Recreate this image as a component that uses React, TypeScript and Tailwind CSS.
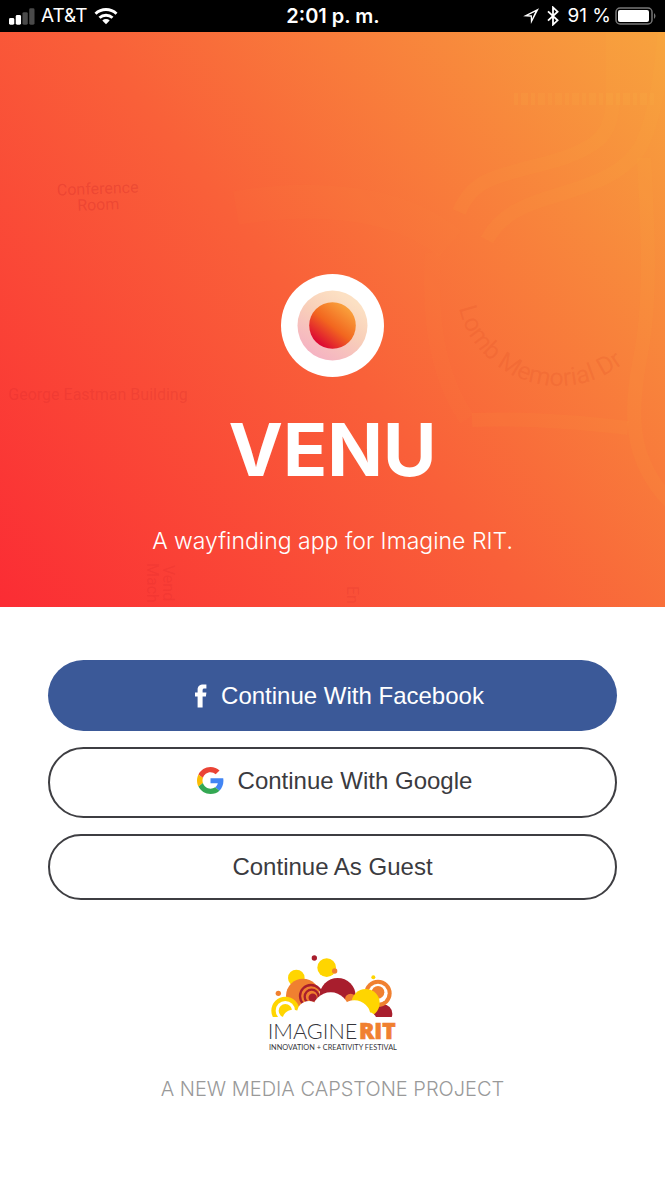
function StatusBar() {
  return (
    <header className="grid h-8 grid-cols-[1fr_auto_1fr] items-center bg-black pr-2 pl-[9px] font-['Inter',sans-serif] text-[19px] leading-6 text-white">
      <div className="flex items-center gap-[6px]">
        <svg viewBox="0 0 27 17" className="h-[17px] w-[26px]" aria-label="Signal strength">
          <rect x="0" y="10" width="5.5" height="7" rx="1.5" fill="#fff" />
          <rect x="7" y="7" width="5.5" height="10" rx="1.5" fill="#fff" />
          <rect x="14" y="4" width="5.5" height="13" rx="1.5" fill="#4a4a4a" />
          <rect x="21" y="0" width="5.5" height="17" rx="1.5" fill="#4a4a4a" />
        </svg>
        <span>AT&amp;T</span>
        <svg viewBox="0 0 24 18" className="h-[18px] w-6" fill="none" stroke="#fff" strokeWidth="2.9" aria-label="Wi-Fi">
          <path d="M1.5 6.7a15.3 15.3 0 0 1 21 0" />
          <path d="M5.5 10.8a9.4 9.4 0 0 1 13 0" />
          <path d="M12 17.2 8.3 13.5a5.4 5.4 0 0 1 7.4 0z" fill="#fff" stroke="none" />
        </svg>
      </div>
      <span className="text-[20px] font-semibold">2:01 p. m.</span>
      <div className="flex items-center justify-end gap-2">
        <svg viewBox="0 0 17 17" className="h-4 w-4" aria-label="Location">
          <path d="M17 .2.2 8.8l8 .4.2 7.8zM13 3.9 9.6 11.5l-.1-3.7-4-.2z" fill="#fff" fillRule="evenodd" />
        </svg>
        <svg viewBox="0 0 12 20" className="h-5 w-3" fill="none" stroke="#fff" strokeWidth="1.8" aria-label="Bluetooth">
          <path d="M1 5.4 10.6 14.3 6 18.6V1.4l4.6 4.3L1 14.6" />
        </svg>
        <span>91 %</span>
        <svg viewBox="0 0 42 18" className="-ml-1 h-[18px] w-[42px]" aria-label="Battery">
          <rect x="1" y="1" width="36" height="16" rx="4" fill="none" stroke="#777" strokeWidth="1.5" />
          <rect x="3" y="3" width="31" height="12" rx="2" fill="#fff" />
          <path d="M39 6q3 3 0 6z" fill="#777" />
        </svg>
      </div>
    </header>
  );
}

function CampusMap() {
  return (
    <svg viewBox="0 0 665 575" preserveAspectRatio="xMidYMid slice" className="absolute inset-0 h-full w-full" aria-hidden="true">
      <g fill="none" stroke="#ffc94f" strokeWidth="14" strokeOpacity=".055">
        <path d="M613 -8v70c0 30-8 42-20 50-30 20-72 22-104 36-16 7-24 18-30 32" />
        <path d="M665 -8c-3 50-10 90-22 118-14 30-50 42-82 52-36 10-60 20-74 46" />
        <path d="M644 126c3 60 8 130-2 190-12 60-16 110 30 156" />
        <path d="M472 388c50-2 106 2 156 8" />
      </g>
      <g fill="none" stroke="#ffab4a" strokeOpacity=".035">
        <path d="M236 176c70-12 160-10 214 36" strokeWidth="34" />
        <path d="M433 221c-4 60 2 120 34 166" strokeWidth="16" />
      </g>
      <path d="M514 67h142" stroke="#ffd35c" strokeOpacity=".07" strokeWidth="12" strokeDasharray="4 3 7 3" />
      <g fill="#c41a24" fillOpacity=".24" fontFamily="Roboto, sans-serif" fontSize="16" textAnchor="middle">
        <g transform="rotate(-2 98 165)">
          <text x="98" y="162">Conference</text>
          <text x="98" y="178">Room</text>
        </g>
        <text x="98" y="368" fillOpacity=".18">George Eastman Building</text>
        <g fillOpacity=".14" textAnchor="start">
          <text transform="translate(163 533) rotate(90)">Vend</text>
          <text transform="translate(147 531) rotate(90)">Mach</text>
          <text transform="translate(347 554) rotate(90)">En</text>
        </g>
      </g>
      <path id="lomb-road" d="M459 276C468 320 512 355 560 354 592 353 614 342 645 314" fill="none" />
      <text fill="#d8431f" fillOpacity=".17" fontFamily="Roboto, sans-serif" fontSize="25">
        <textPath href="#lomb-road">Lomb Memorial Dr</textPath>
      </text>
    </svg>
  );
}

function VenuMark() {
  return (
    <svg viewBox="0 0 103 103" className="h-[103px] w-[103px]" aria-hidden="true">
      <defs>
        <linearGradient id="venu-core" x1=".15" y1=".85" x2=".75" y2=".1">
          <stop offset="0" stopColor="#dc0834" />
          <stop offset=".5" stopColor="#f2661f" />
          <stop offset="1" stopColor="#f99d3a" />
        </linearGradient>
        <linearGradient id="venu-halo" x1=".2" y1=".9" x2=".7" y2=".1">
          <stop offset="0" stopColor="#f5b3c2" />
          <stop offset=".55" stopColor="#f8ceb9" />
          <stop offset="1" stopColor="#fce0c3" />
        </linearGradient>
      </defs>
      <circle cx="51.5" cy="51.5" r="51.5" fill="#fff" />
      <circle cx="51.5" cy="51.5" r="35" fill="url(#venu-halo)" />
      <circle cx="51.5" cy="51.5" r="23.3" fill="url(#venu-core)" />
    </svg>
  );
}

function FacebookIcon() {
  return (
    <svg viewBox="0 0 24 24" className="h-6 w-6" fill="#fff" aria-hidden="true">
      <path d="M8.6 23.5V12.6H6V8.4h2.6V5.8C8.6 2 10.8.4 14.3.4c1.4 0 2.6.1 3.1.2v3.9h-1.9c-1.4 0-1.9.6-1.9 1.8v2.1h3.8l-.5 4.2h-3.3v10.9z" />
    </svg>
  );
}

function GoogleIcon() {
  return (
    <svg viewBox="0 0 48 48" className="h-[27px] w-[27px]" aria-hidden="true">
      <path fill="#EA4335" d="M24 9.5c3.54 0 6.71 1.22 9.21 3.6l6.85-6.85C35.9 2.38 30.47 0 24 0 14.62 0 6.51 5.38 2.56 13.22l7.98 6.19C12.43 13.72 17.74 9.5 24 9.5z" />
      <path fill="#4285F4" d="M46.98 24.55c0-1.57-.15-3.09-.38-4.55H24v9.02h12.94c-.58 2.96-2.26 5.48-4.78 7.18l7.73 6c4.51-4.18 7.09-10.36 7.09-17.65z" />
      <path fill="#FBBC05" d="M10.53 28.59c-.48-1.45-.76-2.99-.76-4.59s.27-3.14.76-4.59l-7.98-6.19C.92 16.46 0 20.12 0 24c0 3.88.92 7.54 2.56 10.78l7.97-6.19z" />
      <path fill="#34A853" d="M24 48c6.48 0 11.93-2.13 15.89-5.81l-7.73-6c-2.15 1.45-4.92 2.3-8.16 2.3-6.26 0-11.57-4.22-13.47-9.91l-7.98 6.19C6.51 42.62 14.62 48 24 48z" />
    </svg>
  );
}

function ImagineLogo() {
  return (
    <svg viewBox="-7 0 450 330" className="h-[110px] w-[150px]" role="img" aria-label="Imagine RIT Innovation + Creativity Festival">
      <defs>
        <clipPath id="skyline">
          <rect x="0" y="0" width="450" height="216" />
        </clipPath>
      </defs>
      <g clipPath="url(#skyline)">
        <circle cx="162" cy="39" r="8" fill="#a81e2d" />
        <circle cx="199" cy="68" r="28" fill="#ffd500" />
        <circle cx="223" cy="78" r="8" fill="#f08030" />
        <circle cx="108" cy="99" r="25" fill="#ffd500" />
        <circle cx="54" cy="145" r="8" fill="#f08030" />
        <circle cx="128" cy="152" r="51" fill="#f08030" />
        <g fill="none" stroke="#a81e2d" strokeWidth="7">
          <circle cx="152" cy="153" r="33" />
          <circle cx="154" cy="155" r="21" />
          <circle cx="157" cy="158" r="9" fill="#a81e2d" />
        </g>
        <circle cx="232" cy="153" r="54" fill="#a81e2d" />
        <circle cx="271" cy="163" r="17" fill="#f08030" />
        <circle cx="368" cy="206" r="28" fill="#a81e2d" />
        <circle cx="353" cy="145" r="41" fill="#f08030" />
        <circle cx="353" cy="145" r="29" fill="#fff" />
        <circle cx="353" cy="142" r="19" fill="#f08030" />
        <circle cx="316" cy="174" r="42" fill="#ffd500" />
        <circle cx="339" cy="97" r="6" fill="#ffd500" />
        <circle cx="75" cy="197" r="42" fill="#ffd500" />
        <circle cx="75" cy="197" r="29" fill="#fff" />
        <circle cx="75" cy="197" r="20" fill="#ffd500" />
        <g fill="#fff">
          <circle cx="98" cy="226" r="32" />
          <circle cx="146" cy="204" r="36" />
          <circle cx="211" cy="197" r="55" />
          <circle cx="282" cy="215" r="49" />
          <circle cx="325" cy="226" r="24" />
        </g>
      </g>
      <g fill="#35353a" fontFamily="Lato, sans-serif">
        <text x="22" y="282" fontSize="65" fontWeight="300">IMAGINE</text>
        <text x="26" y="314" fontSize="22" fontWeight="400">INNOVATION + CREATIVITY FESTIVAL</text>
      </g>
      <text x="296" y="282" fontFamily="Open Sans, sans-serif" fontSize="68" fontWeight="800" fill="#f08030" stroke="#f08030" strokeWidth="2">RIT</text>
    </svg>
  );
}

export default function App() {
  return (
    <div className="flex min-h-screen flex-col bg-white">
      <StatusBar />
      <main>
        <section className="relative flex flex-col items-center bg-[linear-gradient(52deg,#fb2c34_0%,#f96039_48%,#f7a33e_100%)] px-6 pt-[242px] pb-12 text-center font-['Inter',sans-serif] text-white">
          <CampusMap />
          <div className="relative flex flex-col items-center">
            <VenuMark />
            <h1 className="mt-8 text-[73px] leading-[82px] font-bold">VENU</h1>
            <p className="mt-8 text-[23px] leading-[36px] font-light">A wayfinding app for Imagine RIT.</p>
          </div>
        </section>
        <section className="flex flex-col gap-4 px-12 pt-[53px] font-['Liberation_Sans',sans-serif] text-[24px] leading-8">
          <button type="button" className="flex h-[71px] items-center justify-center gap-2 rounded-full bg-[#3b5998] pl-2 text-white">
            <FacebookIcon />
            Continue With Facebook
          </button>
          <button type="button" className="flex h-[71px] items-center justify-center gap-[14px] rounded-full border-2 border-[#3e3e42] pb-1 pl-1 text-[#3b3b40]">
            <GoogleIcon />
            Continue With Google
          </button>
          <button type="button" className="flex h-[66px] items-center justify-center rounded-full border-2 border-[#3e3e42] text-[#3b3b40]">
            Continue As Guest
          </button>
        </section>
      </main>
      <footer className="flex flex-col items-center px-6 pt-[45px] text-center">
        <ImagineLogo />
        <p className="mt-5 font-['Inter',sans-serif] text-[20px] leading-7 font-light text-[#999999]">A NEW MEDIA CAPSTONE PROJECT</p>
      </footer>
    </div>
  );
}
